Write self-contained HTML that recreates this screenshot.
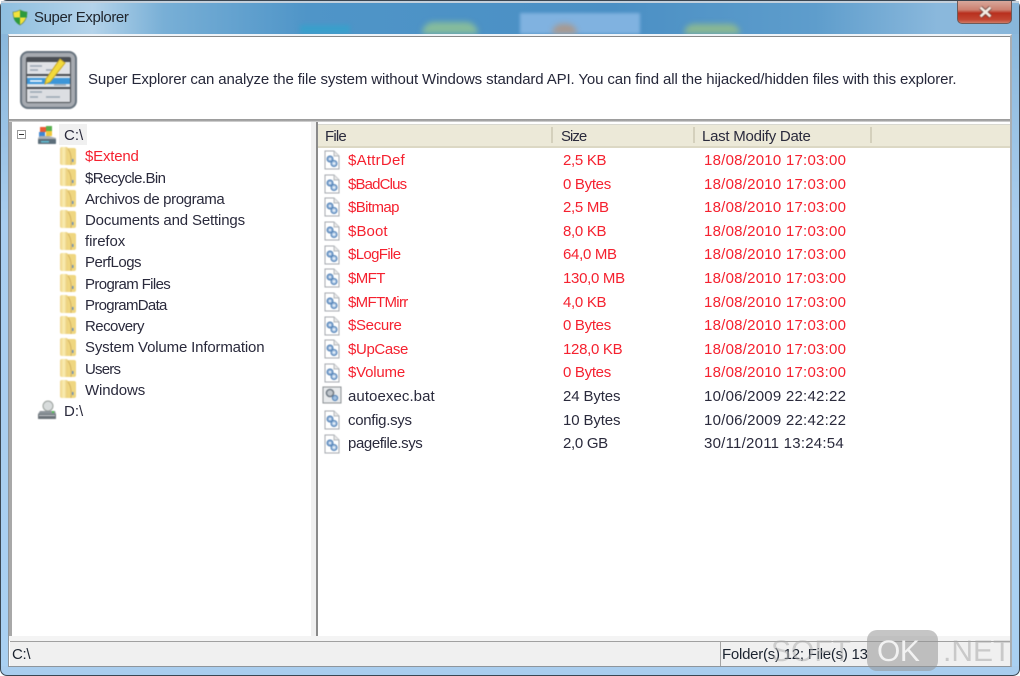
<!DOCTYPE html>
<html><head><meta charset="utf-8"><style>
html,body{margin:0;padding:0;background:#fff}
#w{position:relative;width:1020px;height:676px;overflow:hidden;font-family:"Liberation Sans",sans-serif;font-size:15px;color:#2a2a3c;background:#fff}
#w div,#w svg{position:absolute}
#w svg{filter:blur(.4px)}
.t{white-space:nowrap;line-height:18px;height:18px;filter:blur(.25px)}
.r{color:#f5212f}
.d{letter-spacing:.24px}
.s{letter-spacing:-.3px}
</style></head><body><div id="w">
<svg width="0" height="0"><defs>
<linearGradient id="fg" x1="0" x2="1"><stop offset="0" stop-color="#eed488"/><stop offset=".5" stop-color="#fbeeb4"/><stop offset="1" stop-color="#e2c26c"/></linearGradient>
<symbol id="fold" viewBox="0 0 18 20"><path d="M1 3Q1 1 3 1H7Q9 1 9 3V19H3Q1 19 1 17Z" fill="url(#fg)"/><path d="M8 2H15Q17 2 17 4V17Q17 19 15 19H8Z" fill="#efd680"/><path d="M9 3Q13 8 12 19" stroke="#d2b060" fill="none"/><rect x="13" y="13" width="1.5" height="3" fill="#6d8fb5"/></symbol>
<symbol id="file" viewBox="0 0 18 20"><path d="M2 1H11L16 6V19H2Z" fill="#fff" stroke="#a4a8ae"/><path d="M11 1V6H16" fill="#e8e8e8" stroke="#b4b8bc"/><circle cx="7" cy="9" r="3" fill="#8fb1d8" stroke="#4f7fb4"/><circle cx="11" cy="13.5" r="3" fill="#a9c5e4" stroke="#4f7fb4"/><circle cx="7" cy="9" r="1" fill="#fff"/><circle cx="11" cy="13.5" r="1" fill="#fff"/></symbol>
</defs></svg>

<!-- frame -->
<div style="left:0;top:0;width:1020px;height:676px;background:#a9cdee;border-radius:7px;box-sizing:border-box;border:1px solid #3a4652"></div>
<div style="left:1px;top:1px;width:1018px;height:2px;background:#c3d0dc"></div>
<div style="left:1px;top:3px;width:1018px;height:31px;background:linear-gradient(90deg,#8fbfdf 0,#b4d3ea 9%,#78afd6 16%,#4f95c8 30%,#4a8fc4 60%,#5e9dcc 80%,#8ab8dc 92%,#88b6da 100%)"></div>
<div style="left:300px;top:25px;width:50px;height:9px;background:#3a9fcb;filter:blur(2px)"></div>
<div style="left:422px;top:22px;width:56px;height:12px;background:#86bc9c;border-radius:30px 30px 0 0;filter:blur(3px)"></div>
<div style="left:520px;top:13px;width:120px;height:21px;background:#80b2e0;filter:blur(1.5px)"></div>
<div style="left:552px;top:24px;width:25px;height:10px;background:#a8988e;border-radius:12px 12px 0 0;filter:blur(3px)"></div>
<div style="left:684px;top:24px;width:56px;height:10px;background:#8ab892;border-radius:30px 30px 0 0;filter:blur(3px)"></div>
<div style="left:1px;top:34px;width:8px;height:632px;background:linear-gradient(#8ab8dc,#a9cdee 30%,#a9d0f2)"></div>
<div style="left:1011px;top:34px;width:8px;height:632px;background:linear-gradient(#8cb9dc,#a9cdee 30%,#a9d0f2)"></div>

<!-- title -->
<svg style="left:12px;top:9px" width="16" height="17" viewBox="0 0 16 17"><path d="M8 1Q12 3 15 3Q15 12 8 16Q1 12 1 3Q4 3 8 1Z" fill="#f3e23a" stroke="#587a4a" stroke-width=".6"/><path d="M8 1Q12 3 15 3V8.5H8Z" fill="#2e9a3c"/><path d="M8 8.5H1.5Q3 14 8 16Z" fill="#2e9a3c"/></svg>
<div class="t" style="left:34px;top:9px;color:#20262e;letter-spacing:-.4px">Super Explorer</div>

<!-- close button -->
<div style="left:957px;top:1px;width:55px;height:23px;box-sizing:border-box;border:1px solid #6d5a58;border-top:none;border-radius:0 0 5px 5px;background:linear-gradient(#d8a89c 0,#cc8070 40%,#b8301e 55%,#c24632 85%,#cf7a66 100%)"></div>
<svg style="left:978px;top:6px" width="15" height="12" viewBox="0 0 15 12"><path d="M2.5 1.5L12.5 10.5M12.5 1.5L2.5 10.5" stroke="#5c3a36" stroke-width="4.2"/><path d="M2.5 1.5L12.5 10.5M12.5 1.5L2.5 10.5" stroke="#f4ebe2" stroke-width="2.8"/></svg>

<!-- client -->
<div style="left:8px;top:34px;width:1004px;height:633px;background:#fff;box-sizing:border-box;border:1px solid #8e959c;border-top:2px solid #f0f4f8;border-right:2px solid #a9aeb3"></div>
<div style="left:9px;top:36px;width:1001px;height:1px;background:#888"></div>

<!-- header logo -->
<svg style="left:20px;top:51px" width="57" height="58" viewBox="0 0 57 58">
<rect x="1" y="1" width="55" height="56" rx="7" fill="#a6aab0" stroke="#68747f" stroke-width="2"/>
<rect x="6" y="6" width="45" height="46" rx="2" fill="#4a4e54"/>
<rect x="7" y="11" width="43" height="12" fill="#e0e2e6"/>
<rect x="7" y="25" width="43" height="11" fill="#dfe5ea"/>
<rect x="7" y="27" width="43" height="6" fill="#3d96d8"/>
<rect x="7" y="38" width="43" height="13" fill="#dcdee2"/>
<path d="M10 15h12M10 19h8M26 19h10M10 41h12M10 46h8M26 46h14M34 34h12" stroke="#9aa6b2" stroke-width="1.4"/>
<path d="M10 30h12" stroke="#eaf4fc" stroke-width="1.8"/>
<path d="M26 28L40 8L45 12L30 31L25 33Z" fill="#f2da3c" stroke="#c8a72a"/>
</svg>
<div class="t" style="left:88px;top:71px;letter-spacing:-.12px;color:#26283a">Super Explorer can analyze the file system without Windows standard API. You can find all the hijacked/hidden files with this explorer.</div>

<div style="left:9px;top:119px;width:1001px;height:3px;background:linear-gradient(#9a9a9a,#a8a8a8 66%,#efefef)"></div>

<!-- tree -->
<div style="left:9px;top:122px;width:3px;height:519px;background:#a8a8a8"></div>
<div style="left:311px;top:122px;width:6px;height:519px;background:#f0f0f0"></div>
<div style="left:316px;top:122px;width:2px;height:515px;background:#8a8a8a"></div>
<div style="left:17px;top:130px;width:9px;height:9px;box-sizing:border-box;border:1px solid #999;background:#fff"></div>
<div style="left:19px;top:134px;width:5px;height:1px;background:#333"></div>

<svg style="left:37px;top:125px" width="20" height="20" viewBox="0 0 20 20"><rect x="3" y="2" width="6" height="5" fill="#ea5a34"/><rect x="9" y="1" width="6" height="5" fill="#58b04c"/><rect x="2" y="7" width="6" height="5" fill="#3d86d4"/><rect x="9" y="6" width="6" height="5" fill="#f0c83a"/><path d="M3 11H12L19 13V19H1V13Z" fill="#aab0b6"/><rect x="1" y="14" width="18" height="5" rx="1" fill="#5c6e7a"/><rect x="4" y="16" width="8" height="1.5" fill="#5fc0d8"/></svg>
<div style="left:59px;top:124px;width:28px;height:21px;background:#f0f0f0"></div>
<div class="t" style="left:64px;top:127px">C:\</div>

<svg style="left:59px;top:146px" width="18" height="20"><use href="#fold"/></svg><div class="t r" style="left:85px;top:148px;letter-spacing:-.2px">$Extend</div>
<svg style="left:59px;top:167px" width="18" height="20"><use href="#fold"/></svg><div class="t" style="left:85px;top:170px;letter-spacing:-.6px">$Recycle.Bin</div>
<svg style="left:59px;top:188px" width="18" height="20"><use href="#fold"/></svg><div class="t" style="left:85px;top:191px;letter-spacing:-.37px">Archivos de programa</div>
<svg style="left:59px;top:209px" width="18" height="20"><use href="#fold"/></svg><div class="t" style="left:85px;top:212px;letter-spacing:-.16px">Documents and Settings</div>
<svg style="left:59px;top:231px" width="18" height="20"><use href="#fold"/></svg><div class="t" style="left:85px;top:233px;letter-spacing:-.1px">firefox</div>
<svg style="left:59px;top:252px" width="18" height="20"><use href="#fold"/></svg><div class="t" style="left:85px;top:254px;letter-spacing:-.5px">PerfLogs</div>
<svg style="left:59px;top:273px" width="18" height="20"><use href="#fold"/></svg><div class="t" style="left:85px;top:276px;letter-spacing:-.63px">Program Files</div>
<svg style="left:59px;top:294px" width="18" height="20"><use href="#fold"/></svg><div class="t" style="left:85px;top:297px;letter-spacing:-.68px">ProgramData</div>
<svg style="left:59px;top:315px" width="18" height="20"><use href="#fold"/></svg><div class="t" style="left:85px;top:318px;letter-spacing:-.55px">Recovery</div>
<svg style="left:59px;top:337px" width="18" height="20"><use href="#fold"/></svg><div class="t" style="left:85px;top:339px;letter-spacing:-.16px">System Volume Information</div>
<svg style="left:59px;top:358px" width="18" height="20"><use href="#fold"/></svg><div class="t" style="left:85px;top:361px;letter-spacing:-.8px">Users</div>
<svg style="left:59px;top:379px" width="18" height="20"><use href="#fold"/></svg><div class="t" style="left:85px;top:382px;letter-spacing:-.1px">Windows</div>

<svg style="left:37px;top:400px" width="20" height="20" viewBox="0 0 20 20"><circle cx="11" cy="6" r="5" fill="#d8dcdc" stroke="#9aa09c"/><path d="M3 11H18L19 14V19H1V14Z" fill="#8a9298"/><rect x="1" y="14" width="18" height="5" rx="1" fill="#6a7278"/><rect x="2" y="15" width="16" height="1" fill="#c8ccd0"/><rect x="15" y="11" width="2" height="2" fill="#4cc04c"/></svg>
<div class="t" style="left:64px;top:403px">D:\</div>

<!-- list header -->
<div style="left:318px;top:124px;width:692px;height:24px;background:#ece9d8;border-top:1px solid #d8d8d0;box-sizing:border-box"></div>
<div style="left:318px;top:146px;width:692px;height:2px;background:#dcd8c4"></div>
<div style="left:551px;top:127px;width:2px;height:16px;background:#d4d0bc"></div>
<div style="left:693px;top:127px;width:2px;height:16px;background:#d4d0bc"></div>
<div style="left:870px;top:127px;width:2px;height:16px;background:#d4d0bc"></div>
<div class="t" style="left:325px;top:128px;letter-spacing:-.8px">File</div>
<div class="t" style="left:561px;top:128px;letter-spacing:-1px">Size</div>
<div class="t" style="left:702px;top:128px;letter-spacing:-.25px">Last Modify Date</div>

<!-- rows -->
<svg style="left:323px;top:150px" width="18" height="20"><use href="#file"/></svg><div class="t r" style="left:348px;top:152px;letter-spacing:.24px">$AttrDef</div><div class="t r s" style="left:563px;top:152px">2,5 KB</div><div class="t r d" style="left:704px;top:152px">18/08/2010 17:03:00</div>
<svg style="left:323px;top:174px" width="18" height="20"><use href="#file"/></svg><div class="t r" style="left:348px;top:176px;letter-spacing:-.85px">$BadClus</div><div class="t r s" style="left:563px;top:176px">0 Bytes</div><div class="t r d" style="left:704px;top:176px">18/08/2010 17:03:00</div>
<svg style="left:323px;top:197px" width="18" height="20"><use href="#file"/></svg><div class="t r" style="left:348px;top:199px;letter-spacing:-.6px">$Bitmap</div><div class="t r s" style="left:563px;top:199px">2,5 MB</div><div class="t r d" style="left:704px;top:199px">18/08/2010 17:03:00</div>
<svg style="left:323px;top:221px" width="18" height="20"><use href="#file"/></svg><div class="t r" style="left:348px;top:223px;letter-spacing:.1px">$Boot</div><div class="t r s" style="left:563px;top:223px">8,0 KB</div><div class="t r d" style="left:704px;top:223px">18/08/2010 17:03:00</div>
<svg style="left:323px;top:245px" width="18" height="20"><use href="#file"/></svg><div class="t r" style="left:348px;top:246px;letter-spacing:-.64px">$LogFile</div><div class="t r s" style="left:563px;top:246px">64,0 MB</div><div class="t r d" style="left:704px;top:246px">18/08/2010 17:03:00</div>
<svg style="left:323px;top:268px" width="18" height="20"><use href="#file"/></svg><div class="t r" style="left:348px;top:270px;letter-spacing:-.6px">$MFT</div><div class="t r s" style="left:563px;top:270px">130,0 MB</div><div class="t r d" style="left:704px;top:270px">18/08/2010 17:03:00</div>
<svg style="left:323px;top:292px" width="18" height="20"><use href="#file"/></svg><div class="t r" style="left:348px;top:294px;letter-spacing:-.67px">$MFTMirr</div><div class="t r s" style="left:563px;top:294px">4,0 KB</div><div class="t r d" style="left:704px;top:294px">18/08/2010 17:03:00</div>
<svg style="left:323px;top:316px" width="18" height="20"><use href="#file"/></svg><div class="t r" style="left:348px;top:317px;letter-spacing:-.33px">$Secure</div><div class="t r s" style="left:563px;top:317px">0 Bytes</div><div class="t r d" style="left:704px;top:317px">18/08/2010 17:03:00</div>
<svg style="left:323px;top:339px" width="18" height="20"><use href="#file"/></svg><div class="t r" style="left:348px;top:341px;letter-spacing:-.36px">$UpCase</div><div class="t r s" style="left:563px;top:341px">128,0 KB</div><div class="t r d" style="left:704px;top:341px">18/08/2010 17:03:00</div>
<svg style="left:323px;top:363px" width="18" height="20"><use href="#file"/></svg><div class="t r" style="left:348px;top:364px;letter-spacing:-.2px">$Volume</div><div class="t r s" style="left:563px;top:364px">0 Bytes</div><div class="t r d" style="left:704px;top:364px">18/08/2010 17:03:00</div>

<svg style="left:322px;top:386px" width="20" height="19" viewBox="0 0 20 19"><rect x="1" y="1" width="18" height="16" fill="#e8eaec" stroke="#8c9094"/><circle cx="8" cy="7" r="3.6" fill="#c0c6cc" stroke="#6c7680" stroke-width="1.4"/><circle cx="13" cy="12" r="2.6" fill="#9fbfe0" stroke="#4f7fb4"/></svg><div class="t" style="left:348px;top:388px;letter-spacing:.07px">autoexec.bat</div><div class="t s" style="left:563px;top:388px;letter-spacing:-.12px">24 Bytes</div><div class="t d" style="left:704px;top:388px">10/06/2009 22:42:22</div>
<svg style="left:323px;top:410px" width="18" height="20"><use href="#file"/></svg><div class="t" style="left:348px;top:412px;letter-spacing:-.3px">config.sys</div><div class="t s" style="left:563px;top:412px;letter-spacing:-.12px">10 Bytes</div><div class="t d" style="left:704px;top:412px">10/06/2009 22:42:22</div>
<svg style="left:323px;top:434px" width="18" height="20"><use href="#file"/></svg><div class="t" style="left:348px;top:435px;letter-spacing:-.4px">pagefile.sys</div><div class="t s" style="left:563px;top:435px">2,0 GB</div><div class="t d" style="left:704px;top:435px">30/11/2011 13:24:54</div>

<!-- status -->
<div style="left:9px;top:636px;width:1001px;height:5px;background:#f4f4f4"></div>
<div style="left:10px;top:641px;width:1000px;height:25px;background:#f0f0f0;border-top:1px solid #a0a0a0;box-sizing:border-box"></div>
<div style="left:720px;top:641px;width:1px;height:25px;background:#a4a4a4"></div>
<div class="t" style="left:12px;top:646px;color:#1c2430;letter-spacing:-.3px">C:\</div>
<div class="t" style="left:722px;top:646px;color:#1c2430;letter-spacing:-.25px">Folder(s) 12; File(s) 13</div>

<!-- watermark -->
<div style="left:771px;top:634px;font-size:30px;line-height:36px;color:rgba(170,170,170,.5);white-space:nowrap">SOFT</div>
<div style="left:867px;top:630px;width:71px;height:41px;border-radius:10px;background:rgba(150,150,150,.55)"></div>
<div style="left:877px;top:634px;font-size:30px;line-height:36px;color:#f2f2f2;white-space:nowrap;letter-spacing:-.5px">OK</div>
<div style="left:943px;top:634px;font-size:30px;line-height:36px;color:rgba(170,170,170,.55);white-space:nowrap">.NET</div>
</div></body></html>
